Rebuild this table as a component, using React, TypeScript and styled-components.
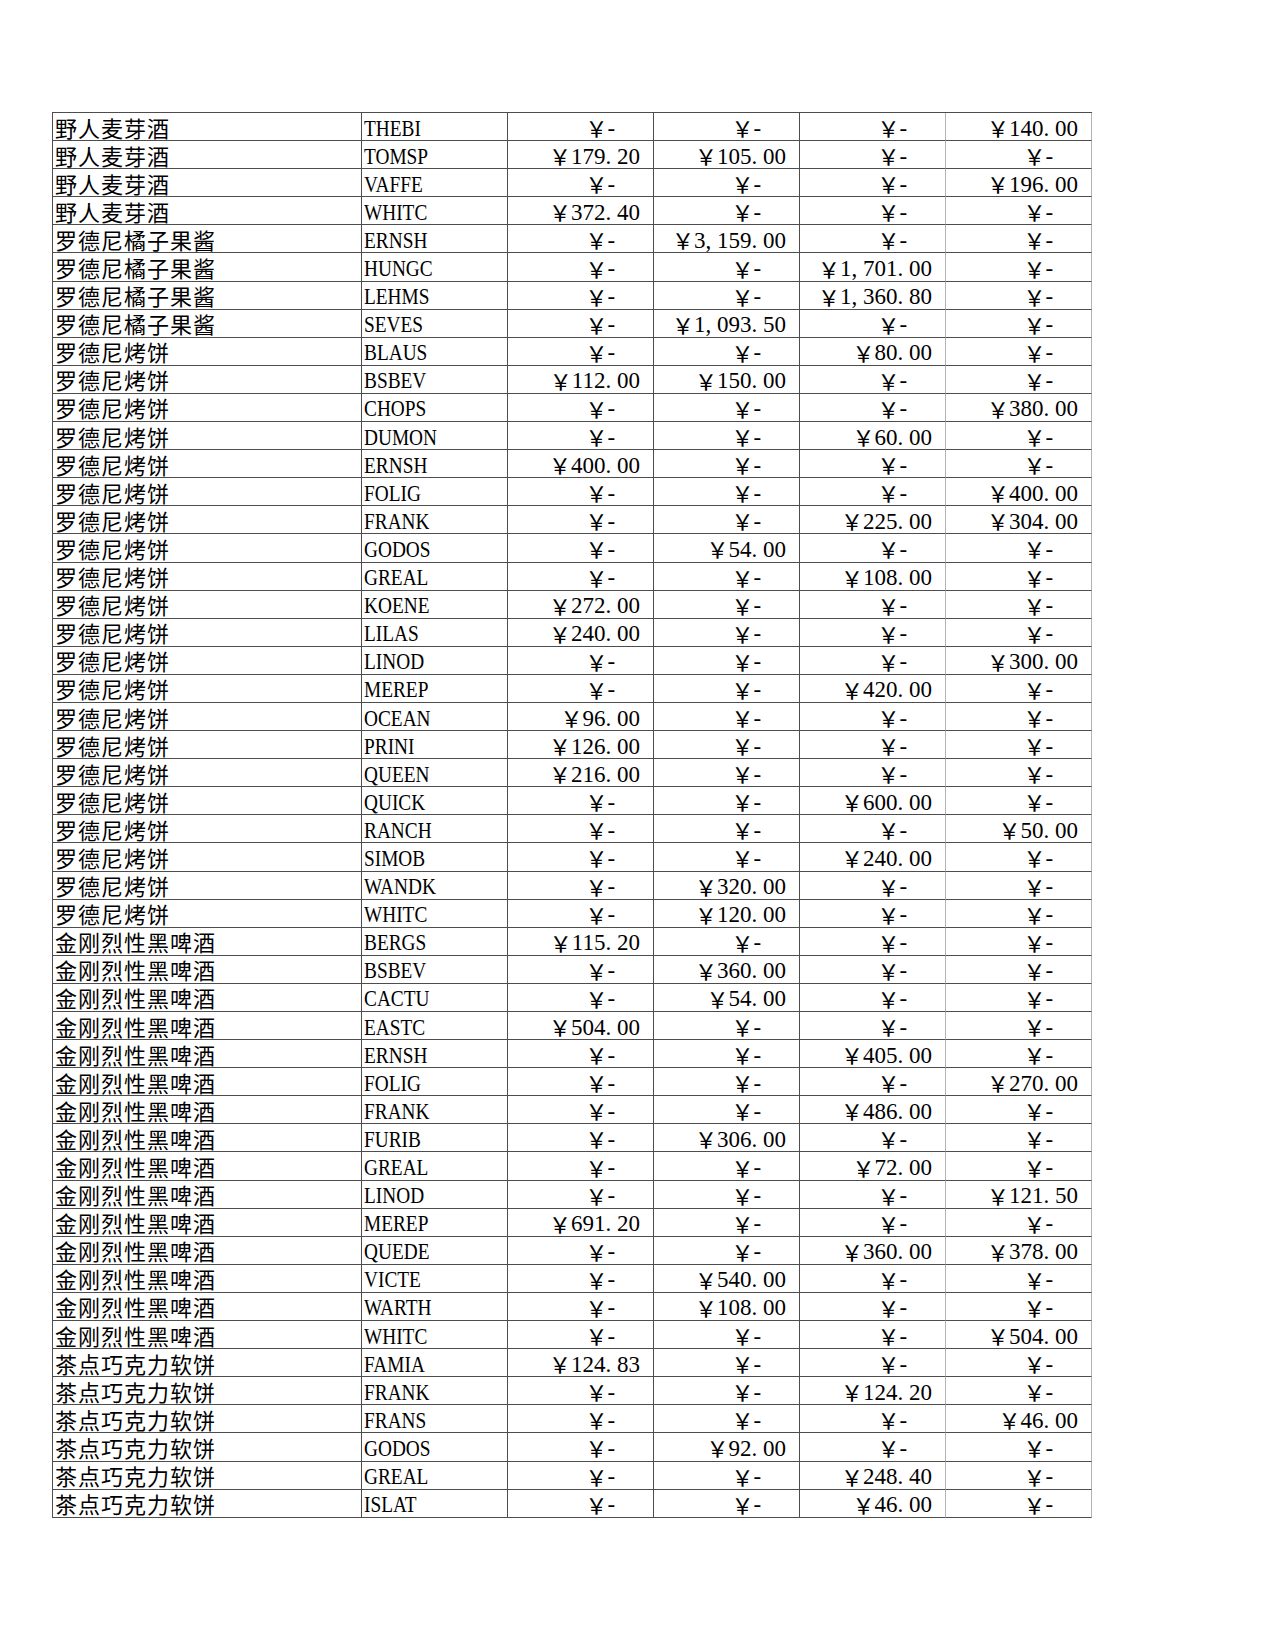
import { createGlobalStyle, styled } from 'styled-components';

type Row = [string, string, string, string, string, string];

const rows: Row[] = [
  ['野人麦芽酒', 'THEBI', '', '', '', '140.00'],
  ['野人麦芽酒', 'TOMSP', '179.20', '105.00', '', ''],
  ['野人麦芽酒', 'VAFFE', '', '', '', '196.00'],
  ['野人麦芽酒', 'WHITC', '372.40', '', '', ''],
  ['罗德尼橘子果酱', 'ERNSH', '', '3,159.00', '', ''],
  ['罗德尼橘子果酱', 'HUNGC', '', '', '1,701.00', ''],
  ['罗德尼橘子果酱', 'LEHMS', '', '', '1,360.80', ''],
  ['罗德尼橘子果酱', 'SEVES', '', '1,093.50', '', ''],
  ['罗德尼烤饼', 'BLAUS', '', '', '80.00', ''],
  ['罗德尼烤饼', 'BSBEV', '112.00', '150.00', '', ''],
  ['罗德尼烤饼', 'CHOPS', '', '', '', '380.00'],
  ['罗德尼烤饼', 'DUMON', '', '', '60.00', ''],
  ['罗德尼烤饼', 'ERNSH', '400.00', '', '', ''],
  ['罗德尼烤饼', 'FOLIG', '', '', '', '400.00'],
  ['罗德尼烤饼', 'FRANK', '', '', '225.00', '304.00'],
  ['罗德尼烤饼', 'GODOS', '', '54.00', '', ''],
  ['罗德尼烤饼', 'GREAL', '', '', '108.00', ''],
  ['罗德尼烤饼', 'KOENE', '272.00', '', '', ''],
  ['罗德尼烤饼', 'LILAS', '240.00', '', '', ''],
  ['罗德尼烤饼', 'LINOD', '', '', '', '300.00'],
  ['罗德尼烤饼', 'MEREP', '', '', '420.00', ''],
  ['罗德尼烤饼', 'OCEAN', '96.00', '', '', ''],
  ['罗德尼烤饼', 'PRINI', '126.00', '', '', ''],
  ['罗德尼烤饼', 'QUEEN', '216.00', '', '', ''],
  ['罗德尼烤饼', 'QUICK', '', '', '600.00', ''],
  ['罗德尼烤饼', 'RANCH', '', '', '', '50.00'],
  ['罗德尼烤饼', 'SIMOB', '', '', '240.00', ''],
  ['罗德尼烤饼', 'WANDK', '', '320.00', '', ''],
  ['罗德尼烤饼', 'WHITC', '', '120.00', '', ''],
  ['金刚烈性黑啤酒', 'BERGS', '115.20', '', '', ''],
  ['金刚烈性黑啤酒', 'BSBEV', '', '360.00', '', ''],
  ['金刚烈性黑啤酒', 'CACTU', '', '54.00', '', ''],
  ['金刚烈性黑啤酒', 'EASTC', '504.00', '', '', ''],
  ['金刚烈性黑啤酒', 'ERNSH', '', '', '405.00', ''],
  ['金刚烈性黑啤酒', 'FOLIG', '', '', '', '270.00'],
  ['金刚烈性黑啤酒', 'FRANK', '', '', '486.00', ''],
  ['金刚烈性黑啤酒', 'FURIB', '', '306.00', '', ''],
  ['金刚烈性黑啤酒', 'GREAL', '', '', '72.00', ''],
  ['金刚烈性黑啤酒', 'LINOD', '', '', '', '121.50'],
  ['金刚烈性黑啤酒', 'MEREP', '691.20', '', '', ''],
  ['金刚烈性黑啤酒', 'QUEDE', '', '', '360.00', '378.00'],
  ['金刚烈性黑啤酒', 'VICTE', '', '540.00', '', ''],
  ['金刚烈性黑啤酒', 'WARTH', '', '108.00', '', ''],
  ['金刚烈性黑啤酒', 'WHITC', '', '', '', '504.00'],
  ['茶点巧克力软饼', 'FAMIA', '124.83', '', '', ''],
  ['茶点巧克力软饼', 'FRANK', '', '', '124.20', ''],
  ['茶点巧克力软饼', 'FRANS', '', '', '', '46.00'],
  ['茶点巧克力软饼', 'GODOS', '', '92.00', '', ''],
  ['茶点巧克力软饼', 'GREAL', '', '', '248.40', ''],
  ['茶点巧克力软饼', 'ISLAT', '', '', '46.00', ''],
];

const DARK = '#4d4d4d';
const LIGHT = '#b3b3b3';

const GlobalStyle = createGlobalStyle`
  html, body {
    margin: 0;
    padding: 0;
    background: #fff;
  }
  body {
    font-family: "Liberation Serif", "Noto Sans CJK SC", serif;
    color: #000;
  }
`;

const Page = styled.div`
  padding: 112px 0 0 52px;
  min-height: 1650px;
  box-sizing: border-box;
`;

const Sheet = styled.div`
  display: grid;
  grid-template-columns: 309px repeat(5, 146px);
  grid-auto-rows: 28.1px;
  width: max-content;
  border-top: 1px solid ${DARK};
  border-left: 1px solid ${DARK};
`;

const Cell = styled.div<{ $line?: string }>`
  box-sizing: border-box;
  border-bottom: 1px solid ${DARK};
  border-right: 1px solid ${({ $line }) => $line ?? DARK};
  display: flex;
  align-items: center;
  padding: 3px 0 0 2px;
  font-size: 23px;
  line-height: 1;
  white-space: nowrap;
`;

const NameCell = styled(Cell)`
  font-family: "Noto Sans CJK SC", sans-serif;
  font-size: 22px;
  letter-spacing: 1px;
  padding-top: 0;
`;

const CodeCell = styled(Cell)``;

// the sheet's latin face is narrow; squeeze the serif to the same width
const Code = styled.span`
  display: inline-block;
  transform: scaleX(0.84);
  transform-origin: left center;
`;

const MoneyCell = styled(Cell)<{ $empty?: boolean }>`
  justify-content: flex-end;
  padding-right: ${({ $empty }) => ($empty ? '34px' : '13px')};
`;

const Yen = styled.span`
  font-family: "Noto Sans CJK SC", sans-serif;
  font-size: 22px;
  position: relative;
  top: -1px;
`;

const Punct = styled.span`
  display: inline-block;
  width: 0.5em;
  text-align: left;
`;

const Money = ({ value }: { value: string }) => (
  <>
    <Yen>￥</Yen>
    {value === ''
      ? <Punct>-</Punct>
      : value.split(/([.,])/).map((part, i) =>
          part === '.' || part === ',' ? <Punct key={i}>{part}</Punct> : <span key={i}>{part}</span>
        )}
  </>
);

const lineFor = (col: number) => (col === 3 || col === 4 ? LIGHT : DARK);

export default function App() {
  return (
    <>
      <GlobalStyle />
      <Page>
        <Sheet>
          {rows.map((row, r) => [
            <NameCell key={`${r}-n`}>{row[0]}</NameCell>,
            <CodeCell key={`${r}-c`}><Code>{row[1]}</Code></CodeCell>,
            ...row.slice(2).map((v, i) => (
              <MoneyCell key={`${r}-${i}`} $empty={v === ''} $line={lineFor(i + 1)}>
                <Money value={v} />
              </MoneyCell>
            )),
          ])}
        </Sheet>
      </Page>
    </>
  );
}
